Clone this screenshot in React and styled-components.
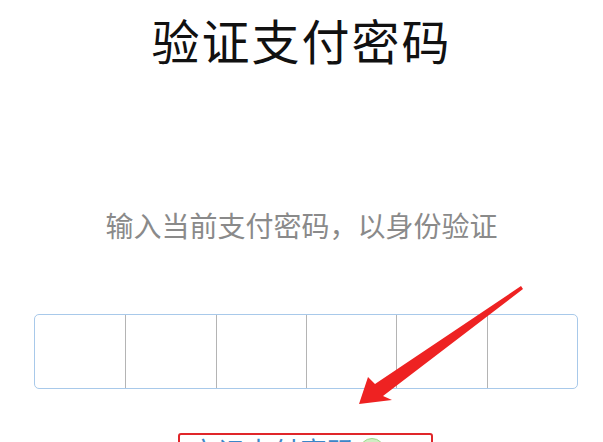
import styled, { createGlobalStyle } from "styled-components";

const GlobalStyle = createGlobalStyle`
  html, body {
    margin: 0;
    padding: 0;
    background: #fff;
    overflow: hidden;
  }
  body {
    font-family: "Noto Sans CJK SC", "Noto Sans", sans-serif;
  }
`

const Page = styled.div`
  position: relative;
  width: 603px;
  height: 442px;
  display: flex;
  flex-direction: column;
  align-items: center;
  overflow: hidden;

  & > * {
    flex-shrink: 0;
  }
`

const Title = styled.h1`
  margin: 10px 0 0;
  font-size: 48px;
  font-weight: 400;
  line-height: 58px;
  color: #111;
  letter-spacing: 2px;
`

const Hint = styled.p`
  margin: 140px 0 0;
  font-size: 28px;
  line-height: 34px;
  color: #8a8a8a;
`

const CodeBox = styled.div`
  margin-top: 72px;
  margin-left: 9px;
  width: 544px;
  height: 75px;
  box-sizing: border-box;
  display: grid;
  grid-template-columns: repeat(6, 1fr);
  border: 1.5px solid #a8c9ea;
  border-radius: 5px;
  background: #fff;
`

const Cell = styled.div`
  border-left: ${({ $first }) => ($first ? "none" : "1.5px solid #b4b4b4")};
`

const ForgotBox = styled.div`
  margin-top: 44px;
  margin-left: 8px;
  width: 255px;
  height: 40px;
  box-sizing: border-box;
  border: 2px solid #e0262a;
  border-radius: 3px;
  padding: 0 0 0 10px;
  display: flex;
  align-items: flex-start;
  gap: 4px;
`

const ForgotText = styled.span`
  font-size: 27px;
  line-height: 32px;
  color: #3b86c8;
  letter-spacing: 0.5px;
`

const Badge = styled.span`
  width: 24px;
  height: 24px;
  margin-top: 3px;
  border-radius: 50%;
  background: #cfeec3;
  border: 1px solid #9ed98c;
`

const Arrow = styled.svg`
  position: absolute;
  left: 0;
  top: 0;
  pointer-events: none;
`

export default function App() {
  return (
    <Page>
      <GlobalStyle />
      <Title>验证支付密码</Title>
      <Hint>输入当前支付密码，以身份验证</Hint>
      <CodeBox>
        {[0, 1, 2, 3, 4, 5].map((i) => (
          <Cell key={i} $first={i === 0} />
        ))}
      </CodeBox>
      <ForgotBox>
        <ForgotText>忘记支付密码</ForgotText>
        <Badge />
      </ForgotBox>
      <Arrow width="603" height="442" viewBox="0 0 603 442">
        <polygon
          points="359,404 368,377 375,384 521,286 523,289 383,396 392,400"
          fill="#ee2222"
        />
      </Arrow>
    </Page>
  );
}
